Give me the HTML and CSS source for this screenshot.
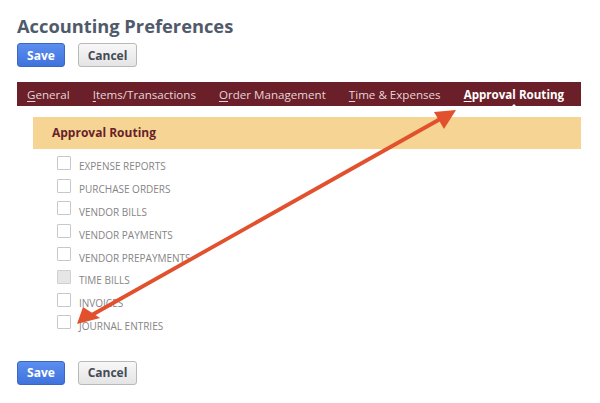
FILE: index.html
```html
<!DOCTYPE html>
<html>
<head>
<meta charset="utf-8">
<link rel="stylesheet" href="styles.css">
</head>
<body>
<div class="page">
  <h1 class="title">Accounting Preferences</h1>
  <div class="actions">
    <button class="btn btn-save">Save</button>
    <button class="btn btn-cancel">Cancel</button>
  </div>
  <nav class="tabs">
    <span class="tab"><u>G</u>eneral</span>
    <span class="tab"><u>I</u>tems/Transactions</span>
    <span class="tab"><u>O</u>rder Management</span>
    <span class="tab"><u>T</u>ime &amp; Expenses</span>
    <span class="tab tab-active"><u>A</u>pproval Routing</span>
  </nav>
  <section class="section">
    <div class="section-head">Approval Routing</div>
    <ul class="checks">
      <li class="check"><span class="box"></span><span class="label">EXPENSE REPORTS</span></li>
      <li class="check"><span class="box"></span><span class="label">PURCHASE ORDERS</span></li>
      <li class="check"><span class="box"></span><span class="label">VENDOR BILLS</span></li>
      <li class="check"><span class="box"></span><span class="label">VENDOR PAYMENTS</span></li>
      <li class="check"><span class="box"></span><span class="label">VENDOR PREPAYMENTS</span></li>
      <li class="check"><span class="box box-disabled"></span><span class="label">TIME BILLS</span></li>
      <li class="check"><span class="box"></span><span class="label">INVOICES</span></li>
      <li class="check"><span class="box"></span><span class="label">JOURNAL ENTRIES</span></li>
    </ul>
  </section>
  <div class="actions actions-bottom">
    <button class="btn btn-save">Save</button>
    <button class="btn btn-cancel">Cancel</button>
  </div>
</div>
<svg class="arrow" width="600" height="403" viewBox="0 0 600 403">
  <line x1="442" y1="118" x2="90" y2="316" stroke="#e2512d" stroke-width="3.8" stroke-linecap="round"/>
  <polygon points="456,110 434,112 444,129" fill="#e2512d"/>
  <polygon points="77,324 83,307 100,318" fill="#e2512d"/>
</svg>
</body>
</html>
```
FILE: styles.css
```css
* { box-sizing: border-box; }
html, body { margin: 0; padding: 0; background: #fff; }
body { font-family: "Open Sans", "Liberation Sans", sans-serif; position: relative; width: 600px; height: 403px; overflow: hidden; }
.page { padding: 12px 19px 0 17px; }
.title { margin: 0; font-size: 18.3px; line-height: 28px; font-weight: 700; color: #4f5a6b; }
.actions { display: flex; gap: 13px; margin-top: 3px; }
.actions-bottom { margin-top: 27px; }
.btn { height: 24px; padding: 0; font-family: inherit; font-size: 12px; font-weight: 700; border-radius: 3px; cursor: pointer; }
.btn-save { width: 48px; color: #fff; background: linear-gradient(#5c8ef0, #3f73dc); border: 1px solid #3a66c4; }
.btn-cancel { width: 59px; color: #444b55; background: linear-gradient(#f8f8f8, #e4e4e4); border: 1px solid #b9b9b9; }
.tabs { position: relative; display: flex; align-items: center; gap: 23px; height: 24px; margin-top: 15px; padding-left: 10px; background: #6a1f29; }
.tab { font-size: 11.6px; color: #e4d6d8; white-space: nowrap; }
.tab u { text-decoration-thickness: 1px; text-underline-offset: 2px; }
.tab-active { position: relative; color: #fff; font-weight: 700; }
.tab-active::after { content: ""; position: absolute; left: 45px; bottom: -7px; border-left: 5px solid transparent; border-right: 5px solid transparent; border-bottom: 5px solid #fff; }
.section { margin: 11px 0 0 16px; }
.section-head { height: 32px; line-height: 32px; padding-left: 19px; background: #f5d494; color: #6a1f29; font-size: 12px; font-weight: 700; }
.checks { list-style: none; margin: 2.5px 0 0; padding: 0 0 0 24px; }
.check { display: flex; align-items: center; height: 22.8px; font-size: 10px; color: #858585; }
.label { padding-top: 7px; }
.box { width: 14px; height: 14px; margin-right: 8px; border: 1px solid #c8c8c8; border-radius: 1px; background: #fff; }
.box-disabled { background: #e6e6e6; border-color: #cfcfcf; }
.arrow { position: absolute; left: 0; top: 0; pointer-events: none; }
```
